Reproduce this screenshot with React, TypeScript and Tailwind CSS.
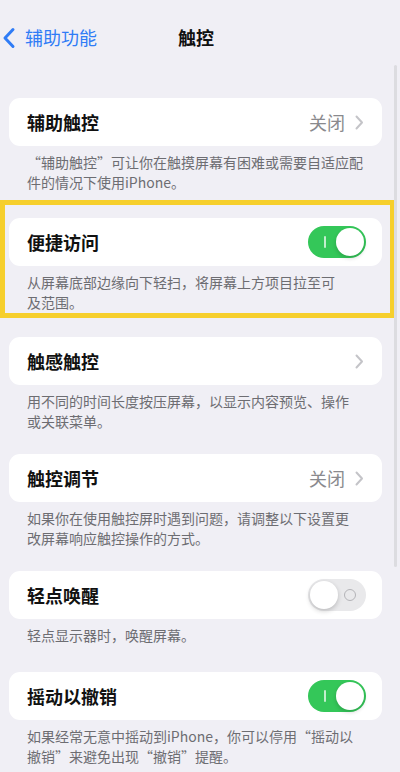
import React from 'react';

type Row = {
  title: string;
  value?: string;
  chevron?: boolean;
  toggle?: 'on' | 'off';
  footer: string[];
  extraTop?: boolean;
};

const ROWS: Row[] = [
  {
    title: '辅助触控',
    value: '关闭',
    chevron: true,
    footer: ['“辅助触控”可让你在触摸屏幕有困难或需要自适应配', '件的情况下使用iPhone。'],
  },
  {
    title: '便捷访问',
    toggle: 'on',
    footer: ['从屏幕底部边缘向下轻扫，将屏幕上方项目拉至可', '及范围。'],
  },
  {
    title: '触感触控',
    chevron: true,
    footer: ['用不同的时间长度按压屏幕，以显示内容预览、操作', '或关联菜单。'],
  },
  {
    title: '触控调节',
    value: '关闭',
    chevron: true,
    footer: ['如果你在使用触控屏时遇到问题，请调整以下设置更', '改屏幕响应触控操作的方式。'],
  },
  {
    title: '轻点唤醒',
    toggle: 'off',
    footer: ['轻点显示器时，唤醒屏幕。'],
  },
  {
    title: '摇动以撤销',
    toggle: 'on',
    extraTop: true,
    footer: ['如果经常无意中摇动到iPhone，你可以停用“摇动以', '撤销”来避免出现“撤销”提醒。'],
  },
];

const Chevron = () => (
  <svg width="9" height="15" viewBox="0 0 9 15" fill="none">
    <path d="M1.5 1.5L7 7.5L1.5 13.5" stroke="#c4c4c8" strokeWidth="2" strokeLinecap="round" strokeLinejoin="round" />
  </svg>
);

const Toggle = ({ on }: { on: boolean }) =>
  on ? (
    <div className="relative w-[58px] h-[32px] rounded-full bg-[#34c759]">
      <div className="absolute left-[16px] top-[10px] w-[2px] h-[12px] rounded-full bg-white/70" />
      <div className="absolute right-[2px] top-[2px] w-[28px] h-[28px] rounded-full bg-white shadow-[0_2px_4px_rgba(0,0,0,0.18)]" />
    </div>
  ) : (
    <div className="relative w-[58px] h-[32px] rounded-full bg-[#e9e9eb]">
      <div className="absolute right-[10px] top-[10px] w-[12px] h-[12px] rounded-full border-[1.5px] border-[#b4b4b8]" />
      <div className="absolute left-[2px] top-[2px] w-[28px] h-[28px] rounded-full bg-white shadow-[0_2px_5px_rgba(0,0,0,0.2)]" />
    </div>
  );

const Section = ({ row }: { row: Row }) => (
  <div className={row.extraTop ? 'mt-[4px]' : ''}>
    <div className="h-[48px] bg-white rounded-[11px] flex items-center pl-[18px] pr-[16px]">
      <span className="flex-1 text-[18px] font-semibold text-[#111]">{row.title}</span>
      {row.value && <span className="text-[18px] text-[#8a8a8e] mr-[10px]">{row.value}</span>}
      {row.chevron && <span className="mr-[2px] flex"><Chevron /></span>}
      {row.toggle && <Toggle on={row.toggle === 'on'} />}
    </div>
    <div className="mt-[6px] px-[18px] text-[14px] leading-[20px] text-[#6d6d72]">
      {row.footer.map((line) => (
        <div key={line} className="whitespace-nowrap">{line}</div>
      ))}
    </div>
  </div>
);

export default function App() {
  return (
    <div
      className="relative w-[400px] h-[772px] overflow-hidden bg-[#f0eff5]"
      style={{ fontFamily: '"Noto Sans CJK SC", "Noto Sans", sans-serif' }}
    >
      {/* nav bar */}
      <div className="relative h-[78px] flex items-start pt-[24px]">
        <div className="flex items-center pl-[2px]">
          <svg width="14" height="22" viewBox="0 0 14 22" fill="none">
            <path d="M11 2.5L3 11L11 19.5" stroke="#2f7cf6" strokeWidth="3" strokeLinecap="round" strokeLinejoin="round" />
          </svg>
          <span className="ml-[9px] text-[18px] text-[#2f7cf6]">辅助功能</span>
        </div>
        <span className="absolute left-[178px] top-[24px] text-[18px] font-semibold text-[#111]">触控</span>
      </div>

      <div className="pt-[20px]">
        <div className="ml-[9px] w-[373px]">
          <Section row={ROWS[0]} />
        </div>

        <div className="mt-[8px] w-[395px] border-[5px] border-[#f6cf2c] pl-[4px] pr-[8px] pt-[13px] pb-[1px]">
          <Section row={ROWS[1]} />
        </div>

        <div className="ml-[9px] w-[373px] mt-[19px] flex flex-col gap-[23px]">
          {ROWS.slice(2).map((row) => (
            <Section key={row.title} row={row} />
          ))}
        </div>
      </div>

      {/* scroll indicator */}
      <div className="absolute right-[3px] top-[65px] w-[3px] h-[502px] rounded-full bg-[#dcdce0]" />
    </div>
  );
}
